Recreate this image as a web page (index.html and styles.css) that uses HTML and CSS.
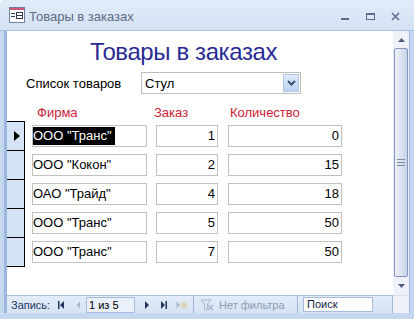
FILE: index.html
```html
<!DOCTYPE html>
<html lang="ru">
<head>
    <meta charset="UTF-8">
    <meta name="viewport" content="width=device-width, initial-scale=1.0">
    <title>Товары в заказах</title>
    <link rel="stylesheet" href="styles.css">
</head>
<body>
    <div class="window">
        <!-- Title bar -->
        <div class="titlebar">
            <svg class="app-icon" width="16" height="16" viewBox="0 0 16 16">
                <rect x="0.5" y="0.5" width="15" height="15" fill="#fff" stroke="#6f7f9c"/>
                <rect x="1" y="1" width="14" height="2" fill="#d4557a"/>
                <rect x="2" y="6" width="4" height="1" fill="#2f3b55"/>
                <rect x="2" y="9" width="4" height="1" fill="#2f3b55"/>
                <rect x="7.5" y="5.5" width="6" height="6" fill="none" stroke="#2f3b55"/>
                <rect x="8" y="8" width="5" height="1" fill="#2f3b55"/>
            </svg>
            <span class="title">Товары в заказах</span>
            <div class="controls">
                <svg width="9" height="9" viewBox="0 0 9 9"><rect x="0" y="6" width="8" height="2" fill="#5d6c8c"/></svg>
                <svg width="9" height="9" viewBox="0 0 9 9"><rect x="0.5" y="1.5" width="8" height="6" fill="none" stroke="#5d6c8c"/><rect x="0" y="1" width="9" height="2" fill="#5d6c8c"/></svg>
                <svg width="9" height="9" viewBox="0 0 9 9"><path d="M1 1 L8 8 M8 1 L1 8" stroke="#5d6c8c" stroke-width="1.6"/></svg>
            </div>
        </div>

        <div class="frame">
            <div class="client">
                <div class="form">
                    <h1 class="heading">Товары в заказах</h1>

                    <div class="filter-row">
                        <label class="filter-label">Список товаров</label>
                        <div class="combo">
                            <span class="combo-text">Стул</span>
                            <span class="combo-btn">
                                <svg width="9" height="6" viewBox="0 0 9 6"><path d="M1 1 L4.5 4.5 L8 1" fill="none" stroke="#3d4f74" stroke-width="2"/></svg>
                            </span>
                        </div>
                    </div>

                    <div class="col-heads">
                        <span class="h-firm">Фирма</span>
                        <span class="h-order">Заказ</span>
                        <span class="h-qty">Количество</span>
                    </div>

                    <div class="records">
                        <div class="rec">
                            <div class="selector">
                                <svg width="6" height="10" viewBox="0 0 6 10"><path d="M0 0 L6 5 L0 10 Z" fill="#000"/></svg>
                            </div>
                            <div class="field firm"><span class="hl">ООО "Транс"</span></div>
                            <div class="field order">1</div>
                            <div class="field qty">0</div>
                        </div>
                        <div class="rec">
                            <div class="selector"></div>
                            <div class="field firm">ООО "Кокон"</div>
                            <div class="field order">2</div>
                            <div class="field qty">15</div>
                        </div>
                        <div class="rec">
                            <div class="selector"></div>
                            <div class="field firm">ОАО "Трайд"</div>
                            <div class="field order">4</div>
                            <div class="field qty">18</div>
                        </div>
                        <div class="rec">
                            <div class="selector"></div>
                            <div class="field firm">ООО "Транс"</div>
                            <div class="field order">5</div>
                            <div class="field qty">50</div>
                        </div>
                        <div class="rec last">
                            <div class="selector"></div>
                            <div class="field firm">ООО "Транс"</div>
                            <div class="field order">7</div>
                            <div class="field qty">50</div>
                        </div>
                    </div>
                </div>

                <!-- Vertical scrollbar -->
                <div class="vscroll">
                    <div class="arrow">
                        <svg width="7" height="4" viewBox="0 0 7 4"><path d="M0 4 L3.5 0 L7 4 Z" fill="#4a5a7c"/></svg>
                    </div>
                    <div class="thumb">
                        <span class="grip"></span>
                    </div>
                    <div class="arrow">
                        <svg width="7" height="4" viewBox="0 0 7 4"><path d="M0 0 L3.5 4 L7 0 Z" fill="#4a5a7c"/></svg>
                    </div>
                </div>

                <!-- Record navigation -->
                <div class="navbar">
                    <span class="nav-label">Запись:</span>
                    <svg class="nav-first" width="8" height="8" viewBox="0 0 8 8"><rect x="1" y="0" width="1.5" height="8" fill="#22355e"/><path d="M7 0 L3 4 L7 8 Z" fill="#22355e"/></svg>
                    <svg class="nav-prev" width="8" height="8" viewBox="0 0 8 8"><path d="M5 0.5 L1.5 4 L5 7.5 Z" fill="#aab8cc"/></svg>
                    <span class="nav-box">1 из 5</span>
                    <svg class="nav-next" width="8" height="8" viewBox="0 0 8 8"><path d="M2 0 L6 4 L2 8 Z" fill="#22355e"/></svg>
                    <svg class="nav-last" width="8" height="8" viewBox="0 0 8 8"><path d="M1 0 L5 4 L1 8 Z" fill="#22355e"/><rect x="5.5" y="0" width="1.5" height="8" fill="#22355e"/></svg>
                    <svg class="nav-new" width="12" height="8" viewBox="0 0 12 8"><path d="M0.5 0.5 L4 4 L0.5 7.5 Z" fill="#aab8cc"/><path d="M8 0 V8 M4 4 H12 M5 1 L11 7 M11 1 L5 7" stroke="#d8c99a" stroke-width="1"/></svg>
                    <span class="nav-sep"></span>
                    <svg class="nav-filter" width="14" height="12" viewBox="0 0 14 12"><path d="M1 1 H11 L7.5 5 V10 L4.5 11 V5 Z" fill="none" stroke="#a9b5c6"/><path d="M8 6 L13 11 M13 6 L8 11" stroke="#a9b5c6" stroke-width="1.4"/></svg>
                    <span class="nav-filter-text">Нет фильтра</span>
                    <span class="nav-sep"></span>
                    <span class="nav-search">Поиск</span>
                </div>
                <div class="corner"></div>
            </div>
        </div>
    </div>
</body>
</html>
```

FILE: styles.css
```css
/* Access form window */
body {
    margin: 0;
    background: #fff;
    font-family: 'Liberation Sans', Arial, sans-serif;
}

.window {
    width: 414px;
    height: 319px;
    display: flex;
    flex-direction: column;
    background: #c5d8f0;
    border-top-left-radius: 5px;
    overflow: hidden;
}

/* Title bar */
.titlebar {
    height: 30px;
    border-bottom: 1px solid #a9c0e0;
    background: linear-gradient(#e2ecf9, #d4e2f4);
    display: flex;
    align-items: center;
    padding: 0 14px 0 9px;
}

.app-icon {
    flex: none;
}

.title {
    margin: 2px 0 0 4px;
    font-size: 13px;
    color: #5f6a85;
}

.controls {
    margin-left: auto;
    display: flex;
    gap: 16px;
    margin-top: 3px;
}

/* Window frame */
.frame {
    flex: 1;
    padding: 0 4px 6px 4px;
}

.client {
    height: 282px;
    border-left: 3px solid #9cb8df;
    border-right: 1px solid #9fb8dd;
    background: #fff;
    display: grid;
    grid-template-columns: 386px 16px;
    grid-template-rows: 264px 18px;
}

/* Form body */
.form {
    overflow: hidden;
}

.heading {
    margin: 6px 0 0;
    padding-left: 83px;
    font-size: 24px;
    font-weight: normal;
    line-height: 30px;
    letter-spacing: -0.4px;
    color: #282b94;
}

.filter-row {
    display: flex;
    align-items: center;
    height: 22px;
    margin-top: 5px;
    font-size: 13px;
}

.filter-label {
    width: 115px;
    padding-left: 19px;
    color: #000;
}

.combo {
    width: 160px;
    height: 22px;
    box-sizing: border-box;
    border: 1px solid #bdbdbd;
    display: flex;
    align-items: center;
    padding: 1px;
}

.combo-text {
    flex: 1;
    padding-left: 2px;
}

.combo-btn {
    width: 16px;
    height: 18px;
    box-sizing: border-box;
    border: 1px solid #b3c8e8;
    background: linear-gradient(#dfeafb, #bcd2f2);
    display: flex;
    align-items: center;
    justify-content: center;
}

.col-heads {
    display: flex;
    height: 16px;
    margin-top: 11px;
    font-size: 13px;
    line-height: 16px;
    color: #cc2236;
}

.h-firm {
    width: 117px;
    padding-left: 30px;
}

.h-order {
    width: 76px;
}

/* Records */
.rec {
    display: flex;
    align-items: flex-start;
    height: 29px;
}

.selector {
    width: 17px;
    height: 28px;
    border-top: 1px solid #000;
    border-right: 1px solid #000;
    background: #d4e3f5;
    display: flex;
    align-items: center;
    padding-left: 7px;
    box-sizing: border-box;
    height: 29px;
    width: 18px;
    flex: none;
}

.rec.last .selector {
    border-bottom: 1px solid #000;
    height: 30px;
}

.field {
    height: 22px;
    box-sizing: border-box;
    margin-top: 4px;
    border: 1px solid #c0c0c0;
    font-size: 13px;
    line-height: 20px;
    color: #000;
    white-space: nowrap;
}

.firm {
    width: 115px;
    margin-left: 7px;
}

.order {
    width: 62px;
    margin-left: 9px;
    text-align: right;
    padding-right: 2px;
}

.qty {
    width: 114px;
    margin-left: 10px;
    text-align: right;
    padding-right: 2px;
}

.hl {
    display: inline-block;
    background: #000;
    color: #fff;
    line-height: 18px;
    vertical-align: top;
    margin-top: 1px;
    padding-right: 3px;
}

/* Scrollbar */
.vscroll {
    background: #eef2f8;
    display: flex;
    flex-direction: column;
}

.arrow {
    height: 17px;
    display: flex;
    align-items: center;
    justify-content: center;
}

.thumb {
    height: 229px;
    margin: 0 1px;
    border: 1px solid #8496c0;
    border-radius: 2px;
    background: linear-gradient(to right, #eef2f9, #dde4f0 50%, #c6d2e6);
    display: flex;
    align-items: center;
    justify-content: center;
    box-sizing: border-box;
}

.grip {
    width: 8px;
    height: 5px;
    border-top: 1px solid #7b8aa9;
    border-bottom: 1px solid #7b8aa9;
    background: linear-gradient(transparent 2px, #7b8aa9 2px, #7b8aa9 3px, transparent 3px);
}

/* Navigation bar */
.navbar {
    display: flex;
    align-items: center;
    border-top: 1px solid #a6bee0;
    border-right: 1px solid #9fb8dd;
    background: linear-gradient(#e3ecf8, #d6e3f4);
    font-size: 11px;
    color: #1d3a69;
}

.nav-label {
    width: 46px;
    padding-left: 4px;
}

.nav-prev {
    margin-left: 10px;
}

.nav-box {
    margin-left: 3px;
    width: 49px;
    height: 16px;
    box-sizing: border-box;
    border: 1px solid #a6bcdc;
    background: #ebf1fa;
    color: #000;
    line-height: 14px;
    padding-left: 2px;
}

.nav-next {
    margin-left: 8px;
}

.nav-last {
    margin-left: 9px;
}

.nav-new {
    margin-left: 8px;
}

.nav-sep {
    align-self: stretch;
    width: 1px;
    margin-left: 5px;
    background: #9fb7da;
}

.nav-filter {
    margin-left: 6px;
}

.nav-filter-text {
    width: 73px;
    margin-left: 5px;
    color: #8e9cb2;
}

.nav-search {
    margin-left: 5px;
    width: 70px;
    height: 15px;
    box-sizing: border-box;
    border: 1px solid #a6bcdc;
    background: #fff;
    color: #101c45;
    line-height: 13px;
    padding-left: 3px;
}

.corner {
    background: #eef2f8;
    border-top: 1px solid #d6e1f0;
}
```
